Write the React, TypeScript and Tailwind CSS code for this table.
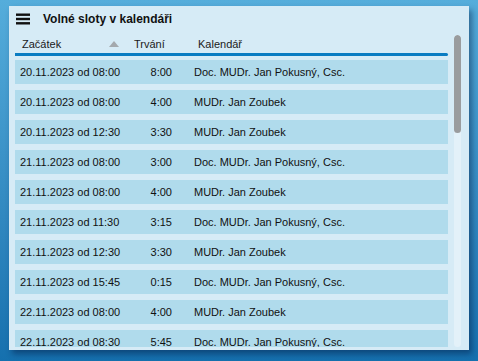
import React from 'react';

interface Slot {
  start: string;
  duration: string;
  calendar: string;
}

const slots: Slot[] = [
  { start: '20.11.2023 od 08:00', duration: '8:00', calendar: 'Doc. MUDr. Jan Pokusný, Csc.' },
  { start: '20.11.2023 od 08:00', duration: '4:00', calendar: 'MUDr. Jan Zoubek' },
  { start: '20.11.2023 od 12:30', duration: '3:30', calendar: 'MUDr. Jan Zoubek' },
  { start: '21.11.2023 od 08:00', duration: '3:00', calendar: 'Doc. MUDr. Jan Pokusný, Csc.' },
  { start: '21.11.2023 od 08:00', duration: '4:00', calendar: 'MUDr. Jan Zoubek' },
  { start: '21.11.2023 od 11:30', duration: '3:15', calendar: 'Doc. MUDr. Jan Pokusný, Csc.' },
  { start: '21.11.2023 od 12:30', duration: '3:30', calendar: 'MUDr. Jan Zoubek' },
  { start: '21.11.2023 od 15:45', duration: '0:15', calendar: 'Doc. MUDr. Jan Pokusný, Csc.' },
  { start: '22.11.2023 od 08:00', duration: '4:00', calendar: 'MUDr. Jan Zoubek' },
  { start: '22.11.2023 od 08:30', duration: '5:45', calendar: 'Doc. MUDr. Jan Pokusný, Csc.' },
];

const App: React.FC = () => {
  return (
    <div
      className="w-[478px] h-[361px] overflow-hidden bg-gradient-to-b from-[#55addb] to-[#1570ae] pt-[6px] pl-[9px]"
      style={{ fontFamily: '"Liberation Sans", Arial, sans-serif' }}
    >
      <div className="w-[460px] h-[344px] bg-[#d6ebf6] shadow-[3px_4px_6px_rgba(0,20,60,0.45)] flex">
        {/* list side */}
        <div className="w-[439px] flex flex-col pl-[6px]">
          <div className="h-[26px] flex items-center pl-[1px]">
            <svg width="14" height="12" viewBox="0 0 14 12">
              <rect x="0" y="0.5" width="14" height="2.4" fill="#111" />
              <rect x="0" y="4.8" width="14" height="2.4" fill="#111" />
              <rect x="0" y="9.1" width="14" height="2.4" fill="#111" />
            </svg>
            <span className="ml-[13px] text-[12px] font-bold text-[#111]">Volné sloty v kalendáři</span>
          </div>
          <div className="h-[18px] mt-[3px] flex items-center text-[11px] text-[#1a1a1a] relative">
            <span className="ml-[7px]">Začátek</span>
            <svg className="absolute left-[94px] top-[6px]" width="10" height="6" viewBox="0 0 10 6">
              <polygon points="5,0 10,6 0,6" fill="#a4a9ad" />
            </svg>
            <span className="absolute left-[119px]">Trvání</span>
            <span className="absolute left-[183px]">Kalendář</span>
          </div>
          <div className="h-[3px] bg-[#0a7cc2] rounded-r-full" />
          <div className="mt-[4px] h-[287px] overflow-hidden flex flex-col gap-[6px]">
            {slots.map((s, i) => (
              <div key={i} className="h-[24px] shrink-0 bg-[#b0dbec] flex items-center text-[11px] text-[#111]">
                <span className="ml-[5px] w-[152px] shrink-0 relative">
                  {s.start}
                  <span className="absolute right-0">{s.duration}</span>
                </span>
                <span className="ml-[22px]">{s.calendar}</span>
              </div>
            ))}
          </div>
        </div>
        {/* scrollbar */}
        <div className="ml-[6px] mt-[29px] w-[7px] h-[312px] rounded-full bg-[#e3f1f9] overflow-hidden">
          <div className="h-[98px] bg-[#9a9c9e] rounded-full" />
        </div>
      </div>
    </div>
  );
};

export default App;
